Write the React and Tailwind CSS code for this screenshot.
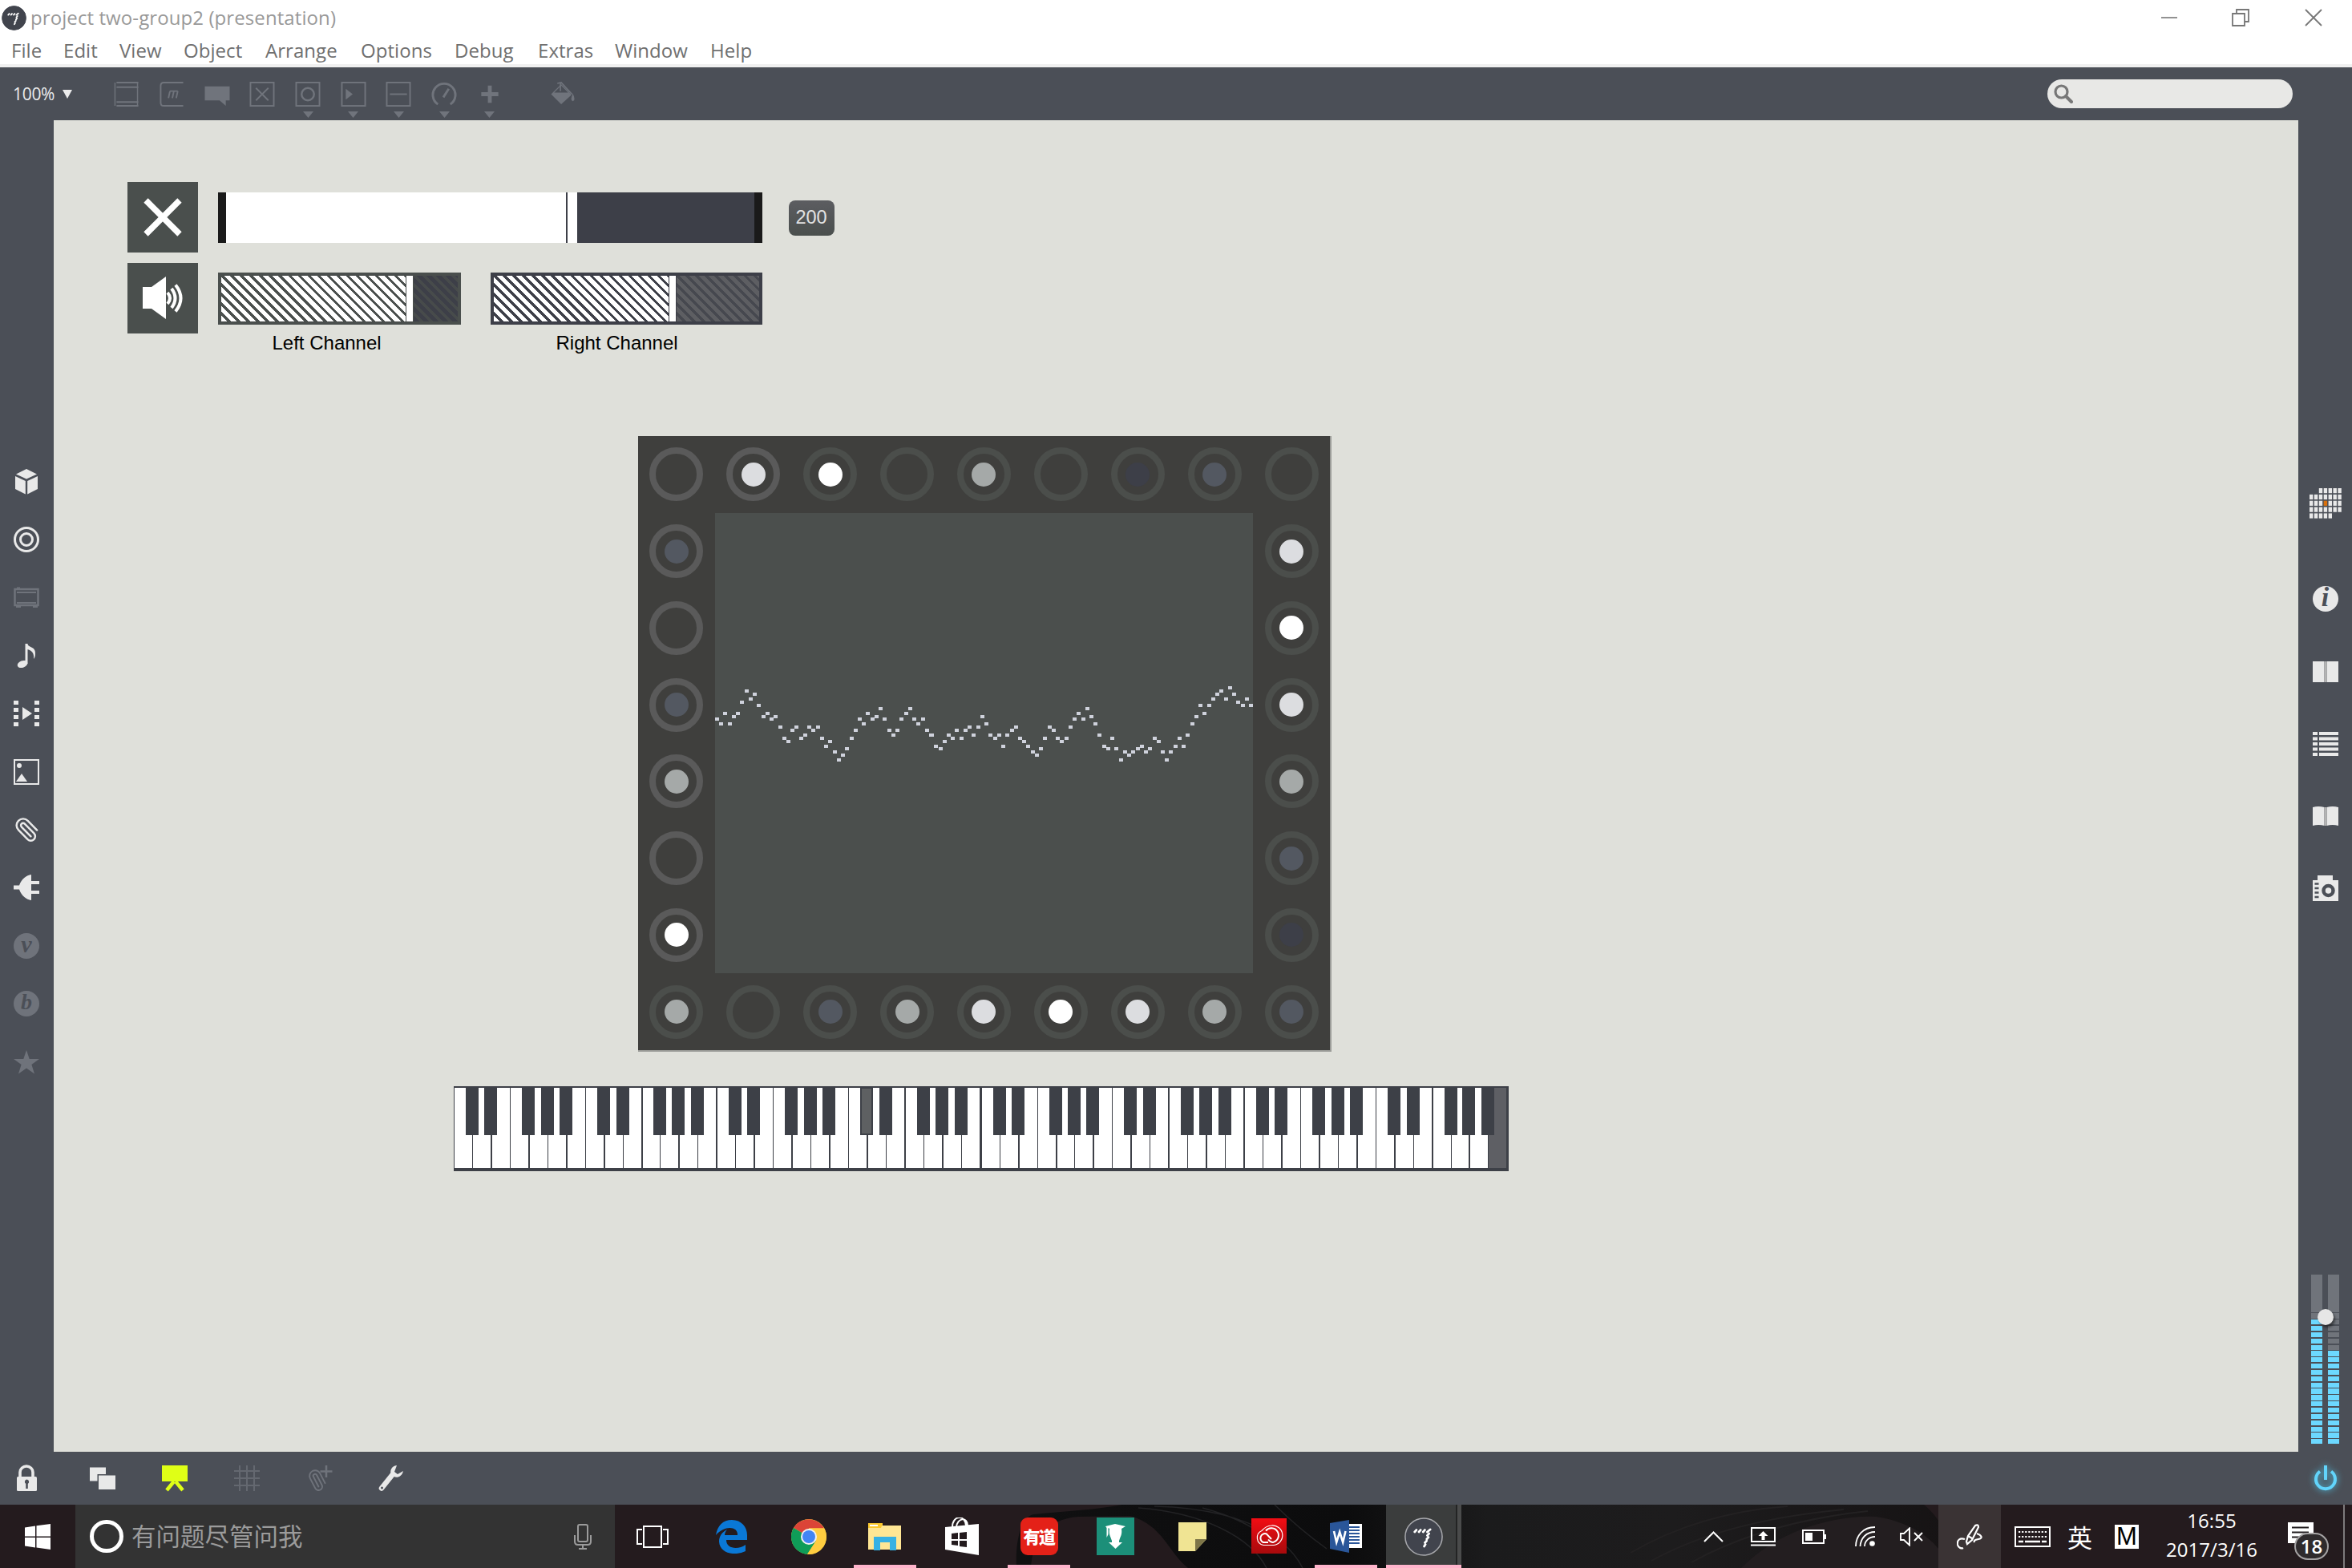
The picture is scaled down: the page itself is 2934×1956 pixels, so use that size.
import React from "react";

const Ico = ({ className = "", vb = "0 0 32 32", children }) => (
  <svg viewBox={vb} className={"block shrink-0 " + className}>
    {children}
  </svg>
);

/* ---------- title bar and menu ---------- */

const MaxLogo = ({ className, ring }) => (
  <Ico className={className}>
    <circle cx="16" cy="16" r="15.4" fill="#41444d" stroke={ring} strokeWidth="1" />
    <path d="M8.500 12l1.400-1.600M12 12l1.400-1.600M15.500 12l1.400-1.600M19 12l2.400-2M19 15l1.400-1.600M18.500 18l1.400-1.600M17 21l1.400-1.600M16.400 24l1-1.600" stroke="#fff" strokeWidth="1.900" strokeLinecap="round" />
  </Ico>
);

const menu = [
  ["File", "w-[65px]"], ["Edit", "w-[70px]"], ["View", "w-[80px]"], ["Object", "w-[102px]"], ["Arrange", "w-[119px]"],
  ["Options", "w-[117px]"], ["Debug", "w-[104px]"], ["Extras", "w-[96px]"], ["Window", "w-[119px]"], ["Help", "w-[80px]"],
];

const TitleBar = () => (
  <header className="h-[84px] shrink-0 border-b-4 border-[#f0f0f0] bg-white">
    <div className="flex h-[44px] items-center">
      <MaxLogo className="ml-[2px] h-[31px] w-[31px]" ring="#41444d" />
      <span className="ml-[5px] text-[24px] leading-none tracking-[0.09px] whitespace-nowrap text-[#999]">project two-group2 (presentation)</span>
      <div className="ml-auto flex items-center text-[#777]">
        <Ico className="mr-[67px] h-[22px] w-[22px]" vb="0 0 22 22"><path d="M1 11h20" stroke="currentColor" strokeWidth="1.6" /></Ico>
        <Ico className="mr-[69px] h-[22px] w-[22px]" vb="0 0 22 22">
          <path d="M1 6h15v15H1zM6 6V1h15v15h-5" fill="none" stroke="currentColor" strokeWidth="1.8" />
        </Ico>
        <Ico className="mr-[37px] h-[22px] w-[22px]" vb="0 0 22 22"><path d="M1 1l20 20M21 1L1 21" stroke="currentColor" strokeWidth="1.8" /></Ico>
      </div>
    </div>
    <nav className="flex h-[36px] items-center pl-[14px] pt-px">
      {menu.map(([m, w]) => (
        <span key={m} className={"shrink-0 text-[24px] leading-none tracking-[0.050px] whitespace-nowrap text-[#707070] " + w}>{m}</span>
      ))}
    </nav>
  </header>
);

/* ---------- top toolbar ---------- */

const S = { fill: "none", stroke: "currentColor", strokeWidth: 2 };
const tools = [
  <g key="a"><path d="M2 1v30M31 1v30" {...S} strokeWidth="1.5" /><path d="M4 1h28M4 7h28M4 26h28M4 31h28" {...S} /></g>,
  <g key="b"><path d="M31 1H6Q2 1 2 5v22q0 4 4 4h25" {...S} /><path d="M12 21l2-9M17 21l2-9M22 21l2-9M14 12h10" {...S} /></g>,
  <path key="c" d="M0 6h32v18h-5v7l-8-7H0z" fill="currentColor" />,
  <g key="d"><rect x="1" y="1" width="30" height="30" {...S} /><path d="M8 8l16 16M24 8L8 24" {...S} /></g>,
  <g key="e"><rect x="1" y="1" width="30" height="30" {...S} /><circle cx="16" cy="16" r="8" {...S} strokeWidth="2.5" /></g>,
  <g key="f"><rect x="1" y="1" width="30" height="30" {...S} /><path d="M6 9l9 7-9 7z" fill="currentColor" /></g>,
  <g key="g"><rect x="1" y="1" width="30" height="30" {...S} /><path d="M5 16h22" {...S} /></g>,
  <g key="h"><path d="M8 29a14.5 14.5 0 1 1 16 0" {...S} strokeWidth="3" /><path d="M15 20l7-11" {...S} strokeWidth="3" /></g>,
  <path key="i" d="M16 5v22M5 16h22" {...S} strokeWidth="5" />,
];

const TopBar = () => (
  <div className="flex h-[66px] shrink-0 items-center bg-[#4b4f57] text-[#70747c]">
    <div className="flex w-[129px] items-center pl-[16px]">
      <span className="text-[21px] leading-none tracking-[-0.3px] text-[#ececec]">100%</span>
      <Ico className="ml-[10px] h-[11px] w-[12px]" vb="0 0 12 11"><path d="M0 0h12L6 11z" fill="#ececec" /></Ico>
    </div>
    {tools.map((t, i) => (
      <div key={i} className="flex h-full w-[56.7px] shrink-0 flex-col items-center pt-[18px]">
        <Ico className="h-[31px] w-[32px]">{t}</Ico>
        {i > 3 && <Ico className="mt-[6px] h-[8px] w-[13px]" vb="0 0 13 8"><path d="M0 0h13L6.500 8z" fill="currentColor" /></Ico>}
      </div>
    ))}
    <Ico className="ml-[47px] h-[31px] w-[32px]">
      <path d="M1 16L14 3l13 13-1 2L14 29z" fill="currentColor" />
      <path d="M5 14L14 5l9 9z" fill="#4b4f57" />
      <path d="M9 2l5-1 14 15M13 2v10" {...S} strokeWidth="1.6" />
      <path d="M29 15q4 9 0 10-4-1 0-10" fill="currentColor" />
    </Ico>
    <div className="ml-auto mr-[74px] flex h-[36px] w-[306px] items-center rounded-full bg-[#e8e8e6] pl-[8px]">
      <Ico className="h-[24px] w-[24px]" vb="0 0 24 24">
        <circle cx="9.500" cy="9.500" r="7.500" fill="none" stroke="#777" strokeWidth="3.200" />
        <path d="M15 15l7 7" stroke="#777" strokeWidth="4" strokeLinecap="round" />
      </Ico>
    </div>
  </div>
);

/* ---------- side bars ---------- */

const L = "#e9e9e9";
const D = "#6f737b";
const BG = "#4b4f57";
const CLIP = "m16 6-8.414 8.586a2 2 0 0 0 2.829 2.829l8.414-8.586a4 4 0 1 0-5.657-5.657l-8.379 8.551a6 6 0 1 0 8.485 8.485l8.379-8.551";
const leftIcons = [
  <g key="1" fill={L}><path d="M16 0l13 6.500-13 6L3 6.500z" /><path d="M2 9l12.800 6v16.500L2 25z" /><path d="M30 9l-12.800 6v16.500L30 25z" /></g>,
  <g key="2" fill="none" stroke={L}><circle cx="16" cy="16" r="14.500" strokeWidth="3" /><circle cx="16" cy="16" r="7.500" strokeWidth="3" /></g>,
  <g key="3" fill="none" stroke={D}><rect x="1.500" y="6" width="29" height="20" strokeWidth="2.500" /><path d="M4 10h24M4 23h24" strokeWidth="2" /><path d="M4 4.500h4M3 28h6M24 28h6" strokeWidth="2" /></g>,
  <g key="4" fill={L}><ellipse cx="11" cy="26.500" rx="6.500" ry="4.300" transform="rotate(-20 11 26.500)" /><path d="M14.500 1h3v25h-3z" /><path d="M17 1c1 5 11 3 10 13 0 3-1 5-2 6 1-8-3-11-8-12z" /></g>,
  <g key="5" fill={L}>{[0, 9, 18, 27].map((y) => <g key={y}><rect x="0" y={y} width="6" height="5" /><rect x="26" y={y} width="6" height="5" /></g>)}<path d="M11 8l12 8-12 8z" /></g>,
  <g key="6"><rect x="1" y="1" width="30" height="30" fill="none" stroke={L} strokeWidth="2" /><circle cx="7" cy="8" r="3" fill={L} /><path d="M3 28l7-10 7 10z" fill={L} /></g>,
  <g key="7" transform="rotate(180 16 16) translate(32.500 -0.500) scale(-1.370 1.370)" fill="none" stroke={L} strokeWidth="1.800" strokeLinecap="round"><path d={CLIP} /></g>,
  <path key="8" d="M0 13.500h7C10 5 16 1 22 0v8h10v4H22v8h10v4H22v8C16 31 10 27 7 18.500H0z" fill={L} />,
];
const Badge = ({ ch, bg, fg, size }) => (
  <div className={"flex h-[32px] w-[32px] items-center justify-center rounded-full pb-[4px] font-['Liberation_Serif',serif] font-bold italic leading-none " + bg + " " + fg + " " + size}>{ch}</div>
);

const LeftBar = () => (
  <aside className="w-[67px] shrink-0 bg-[#4b4f57] pr-px pt-[414.500px]">
    {leftIcons.map((g, i) => (
      <div key={i} className="flex h-[72.400px] items-center justify-center"><Ico className="h-[32px] w-[32px] overflow-visible">{g}</Ico></div>
    ))}
    <div className="flex h-[72.400px] items-center justify-center"><Badge ch="v" bg="bg-[#6f737b]" fg="text-[#4b4f57]" size="text-[30px]" /></div>
    <div className="flex h-[72.400px] items-center justify-center"><Badge ch="b" bg="bg-[#6f737b]" fg="text-[#4b4f57]" size="text-[28px]" /></div>
    <div className="flex h-[72.400px] items-center justify-center">
      <Ico className="h-[32px] w-[32px]"><path d="M16 1l3.700 11H32l-9.600 7 3.600 11.500L16 23.500 6 30.500 9.600 19 0 12h12.300z" fill={D} /></Ico>
    </div>
  </aside>
);

const rightIcons = [
  <g key="1" fill={L}><rect x="0" y="3" width="14.500" height="26" /><rect x="17.500" y="3" width="14.500" height="26" /><rect x="14.500" y="3" width="3" height="26" fill="#b4b4b4" /></g>,
  <g key="2" fill={L}>{[1, 7.5, 14, 20.5, 27].map((y) => <g key={y}><rect x="0" y={y} width="6" height="4" /><rect x="8" y={y} width="24" height="4" /></g>)}</g>,
  <g key="3" fill={L}><path d="M0 5q7-2 14.500 0v23q-7-2-14.500 0zM32 5q-7-2-14.500 0v23q7-2 14.500 0z" /><rect x="14.500" y="5" width="3" height="23" fill="#b4b4b4" /></g>,
  <g key="4"><path d="M0 6h6V0h19v6h7v26H0z" fill={L} /><circle cx="19.500" cy="19" r="6" fill={L} stroke={BG} strokeWidth="4.500" /><path d="M2.500 10.500h5M2.500 16h5M2.500 21.500h5M2.500 27h5" stroke={BG} strokeWidth="2.500" /></g>,
];

const gridCells = [];
[[2, 6], [0, 6], [0, 6], [0, 6], [0, 4]].forEach(([a, b], r) => {
  for (let c = a; c <= b; c++) gridCells.push([c, r]);
});

const Meter = ({ lit }) => (
  <div className="flex w-[14.300px] flex-col">
    <div className="h-[46.700px] bg-[#70747b]" />
    {Array.from({ length: 21 }, (_, i) => (
      <div key={i} className={"mt-[1.670px] h-[6.200px] " + (i >= 21 - lit ? "bg-[#6cd8ff]" : "bg-[#70747b]")} />
    ))}
  </div>
);

const RightBar = () => (
  <aside className="flex w-[67px] shrink-0 flex-col items-center bg-[#4b4f57] pt-[459px]">
    <Ico className="h-[38px] w-[40px]" vb="0 0 40 38">
      {gridCells.map(([c, r]) => (
        <rect key={c + "-" + r} x={c * 5.9} y={r * 7.85} width="4.400" height="6.200" fill={c === 3 && r === 2 ? "#d9700c" : L} />
      ))}
    </Ico>
    <div className="mt-[54px] flex h-[92px] items-center"><Badge ch="i" bg="bg-[#e9e9e9]" fg="text-[#4b4f57]" size="text-[34px]" /></div>
    {rightIcons.map((g, i) => (
      <div key={i} className="flex h-[90px] items-center"><Ico className="h-[32px] w-[32px]">{g}</Ico></div>
    ))}
    <div className="relative mt-[437px] flex h-[212px] gap-[7px]">
      <Meter lit={20} />
      <Meter lit={15} />
      <div className="absolute left-[8px] top-[43px] h-[20px] w-[20px] rounded-full bg-[#e6e6e6] shadow-[2px_3px_3px_rgba(0,0,0,0.45)]" />
    </div>
  </aside>
);

/* ---------- patch contents ---------- */

const Hatch = ({ box, on, off, fillW }) => (
  <div className={"flex h-[65px] p-[4px] " + box}>
    <div className={"h-full " + fillW + " " + on} />
    <div className="mx-px h-full w-[8px] bg-white" />
    <div className={"h-full flex-1 " + off} />
  </div>
);

const Controls = () => (
  <section className="h-[317px] pl-[91.500px] pt-[77px]">
    <div className="flex h-[88px] items-center">
      <div className="flex h-[88px] w-[88px] items-center justify-center bg-[#4a4f4d]">
        <Ico className="h-[50px] w-[50px]" vb="0 0 50 50"><path d="M4 4l42 42M46 4L4 46" stroke="#fff" strokeWidth="7.500" /></Ico>
      </div>
      <div className="ml-[25px] flex h-[63px] w-[679px] border-x-[10px] border-[#1a1a1a] bg-[#3d3f48]">
        <div className="h-full w-[424px] bg-white" />
        <div className="ml-[2px] h-full w-[12px] bg-white" />
      </div>
      <div className="ml-[33px] mt-[2px] flex h-[44px] w-[57px] items-center justify-center rounded-[8px] bg-linear-to-b from-[#5c5d61] to-[#4a4f4d] font-['Liberation_Sans',sans-serif] text-[23.500px] leading-none text-[#e2e2e2]">200</div>
    </div>
    <div className="mt-[13px] flex items-start font-['Liberation_Sans',sans-serif] text-[24px] leading-none text-black">
      <div className="flex h-[88px] w-[88px] items-center justify-center bg-[#4a4f4d]">
        <Ico className="ml-[2px] h-[54px] w-[54px]" vb="0 0 54 54">
          <path d="M1 13h11L30 0v53L12 40H1z" fill="#fff" />
          <path d="M32 20q6 7 0 14M37 15q9 12 0 24M42 10.500q13 16.500 0 33" fill="none" stroke="#fff" strokeWidth="4" />
        </Ico>
      </div>
      <div className="ml-[25px] mt-[12px] w-[303px]">
        <Hatch
          box="bg-[#4a4f4d]"
          on="bg-[repeating-linear-gradient(45deg,#ffffff_0_5.5px,#4a4f4d_5.5px_8.5px)]"
          off="bg-[repeating-linear-gradient(45deg,#3d3f48_0_5.5px,#474b4b_5.5px_8.5px)]"
          fillW="w-[230px]"
        />
        <p className="ml-[68px] mt-[11px] whitespace-nowrap">Left Channel</p>
      </div>
      <div className="ml-[37px] mt-[12px] w-[339px]">
        <Hatch
          box="bg-[#3d3f48]"
          on="bg-[repeating-linear-gradient(45deg,#ffffff_0_5.5px,#3d3f48_5.5px_8.5px)]"
          off="bg-[repeating-linear-gradient(45deg,#5d5e62_0_5.5px,#46484f_5.5px_8.5px)]"
          fillW="w-[218px]"
        />
        <p className="ml-[82px] mt-[11px] whitespace-nowrap">Right Channel</p>
      </div>
    </div>
  </section>
);

const G = "bg-[#a5a9a8]";
const W = "bg-white";
const P = "bg-[#dcdde0]";
const B = "bg-[#535861]";
const K = "bg-[#3d3f48]";
const N = "";

const Knob = ({ dot, bright }) => (
  <div className="flex items-center justify-center">
    <div className={"flex h-[67px] w-[67px] items-center justify-center rounded-full border-[8px] " + (bright ? "border-[#5a5a5a]" : "border-[#4b4e4b]")}>
      {dot && <div className={"h-[30px] w-[30px] rounded-full " + dot} />}
    </div>
  </div>
);

const topRow = [N, P, W, N, G, N, K, B, N];
const leftCol = [B, N, B, G, N, W];
const rightCol = [P, W, P, G, B, K];
const bottomRow = [G, N, B, G, P, W, P, G, B];

/* oscilloscope trace, 128 samples, in thirds of a pixel */
const trace = [
  1088, 1106, 1065, 1106, 1077, 1065, 1024, 983, 1012, 994, 1035, 1077, 1065, 1088, 1077, 1118, 1159, 1170, 1130, 1118, 1159, 1147, 1118, 1130,
  1118, 1159, 1188, 1170, 1211, 1241, 1223, 1199, 1159, 1130, 1088, 1106, 1065, 1088, 1077, 1047, 1088, 1130, 1147, 1130, 1088, 1065, 1047, 1088,
  1106, 1088, 1130, 1147, 1188, 1199, 1170, 1147, 1159, 1130, 1159, 1130, 1118, 1147, 1118, 1077, 1106, 1147, 1159, 1147, 1188, 1147, 1130, 1118,
  1159, 1170, 1188, 1211, 1223, 1199, 1159, 1118, 1130, 1159, 1170, 1159, 1118, 1088, 1065, 1088, 1047, 1077, 1106, 1147, 1188, 1199, 1159, 1199,
  1241, 1211, 1223, 1211, 1199, 1188, 1211, 1199, 1159, 1170, 1211, 1241, 1211, 1188, 1159, 1188, 1147, 1106, 1077, 1035, 1065, 1035, 1012, 994,
  983, 1012, 971, 994, 1024, 1035, 1012, 1035,
];

const KnobPanel = () => (
  <section className="ml-[729px] mt-[77px] grid h-[768px] w-[865px] grid-cols-9 grid-rows-8 border-b-2 border-r-2 border-[#9c9d99] bg-[#3f3f3d]">
    {topRow.map((d, i) => <Knob key={"t" + i} dot={d} bright={i < 2} />)}
    <Knob dot={leftCol[0]} bright />
    <svg className="col-span-7 row-span-6 h-full w-full bg-[#4b4f4d]" viewBox="0 0 670 574" preserveAspectRatio="none" shapeRendering="crispEdges">
      {trace.map((y, i) => (
        <rect key={i} x={Math.round(i * 5.236)} y={Math.round((y - 316) / 3 - 2)} width="5" height="4" fill="#cfd2dc" />
      ))}
    </svg>
    <Knob dot={rightCol[0]} />
    {[1, 2, 3, 4, 5].map((i) => (
      <React.Fragment key={i}>
        <Knob dot={leftCol[i]} bright />
        <Knob dot={rightCol[i]} />
      </React.Fragment>
    ))}
    {bottomRow.map((d, i) => <Knob key={"b" + i} dot={d} />)}
  </section>
);

const whiteKeys = Array.from({ length: 56 }, (_, i) => i);
const hasSharp = (i) => [0, 1, 3, 4, 5].includes(i % 7);

const Piano = () => (
  <section className="ml-[499px] mt-[43px] flex h-[106px] w-[1316px] border-b-[4px] border-t-2 border-l-[1px] border-[#3d4047] bg-[#3d4047]">
    {whiteKeys.map((i) => (
      <div
        key={i}
        className={
          "relative h-full flex-1 border-[#3d4047] " +
          (i === 55 ? "bg-[#5e5f64] " : "bg-white ") +
          (i === 27 || i === 55 ? "border-r-[3px]" : i % 2 ? "border-r-2" : "border-r-[1px]")
        }
      >
        {hasSharp(i) && (
          <div className={"absolute -right-[8px] -top-px z-10 h-[60px] w-[16px] " + (i === 21 ? "border-2 border-[#3d4047] bg-[#5e6062]" : "bg-[#3d4047]")} />
        )}
      </div>
    ))}
  </section>
);

/* ---------- bottom toolbar ---------- */

const bottomIcons = [
  <g key="1" fill={L}><path d="M8 14V8.500a8 7.500 0 0 1 16 0V14" fill="none" stroke={L} strokeWidth="3.600" /><rect x="4" y="14" width="25" height="18" rx="1.500" /><path d="M16.500 17.500a3 3 0 0 1 1.300 5.500v6h-2.600v-6a3 3 0 0 1 1.300-5.500" fill={BG} /></g>,
  <g key="2" fill={L}><rect x="0" y="2.500" width="20" height="17" /><rect x="9.500" y="11" width="23" height="20" fill={BG} /><rect x="11" y="12.500" width="21" height="17.500" /></g>,
  <g key="3"><rect x="0" y="0" width="32" height="20" fill="#dfff16" /><path d="M15 20L6 31M17 20l9 11" stroke="#dfff16" strokeWidth="4.500" /></g>,
  <path key="4" d="M7 0v32M16 0v32M25 0v32M0 7h32M0 16h32M0 25h32" stroke="#646870" strokeWidth="2" />,
  <g key="5" fill="none" stroke="#6f737b"><path d="M25 0v15M17.500 7.500h15" strokeWidth="2.500" /><g transform="translate(13 18.500) rotate(197) scale(-1.150 1.150) translate(-12 -12)"><path d={CLIP} strokeWidth="1.700" strokeLinecap="round" /></g></g>,
  <g key="6"><path d="M4 28.500L18 11" stroke={L} strokeWidth="6.500" strokeLinecap="round" /><path d="M23 0c-7 1-9 7-7 11 4 6 13 5 15-4l-7 4-4-3z" fill={L} /><circle cx="4.500" cy="28" r="1.500" fill={BG} /></g>,
];

const BottomBar = () => (
  <div className="flex h-[66px] shrink-0 items-center bg-[#4b4f57]">
    <Ico className="ml-[17px] h-[32px] w-[32px] overflow-visible">{bottomIcons[0]}</Ico>
    <div className="ml-[63px] flex gap-[58px]">
      {bottomIcons.slice(1).map((g, i) => <Ico key={i} className="h-[32px] w-[32px] overflow-visible">{g}</Ico>)}
    </div>
    <div className="ml-auto flex w-[67px] justify-center">
      <Ico className="h-[30px] w-[30px] overflow-visible drop-shadow-[0_0_4px_#4fc3e6]" vb="0 0 30 30">
        <path d="M8 6.500a12 12 0 1 0 14 0" fill="none" stroke="#62d4fb" strokeWidth="4" />
        <path d="M15 -1v18" stroke="#62d4fb" strokeWidth="4" />
      </Ico>
    </div>
  </div>
);

/* ---------- task bar ---------- */

const apps = [
  [<Ico key="tv" className="mr-[4px] h-[28px] w-[40px]" vb="0 0 40 28"><path d="M9 1h22v26H9zM7 5H1v18h6M33 5h6v18h-6" fill="none" stroke="#fff" strokeWidth="2" /></Ico>, false],
  [<Ico key="ed" className="h-[42px] w-[39px]" vb="0 0 39 42">
    <path d="M0 19C2 7 9 0 20 0c12 0 19 9 19 19v6H13c0 12 16 12 24 6v8c-12 6-32 4-33-12 0-7 4-12 10-15-2 2-3 5-3 7h16C28 8 11 6 0 19z" fill="#0a78d6" />
  </Ico>, false],
  [<Ico key="ch" className="h-[44px] w-[44px]" vb="0 0 44 44">
    <circle cx="22" cy="22" r="22" fill="#ffcd40" />
    <path d="M22 22L3 11A22 22 0 0 1 41 11.500H22z" fill="#db4437" />
    <path d="M3 11A22 22 0 0 0 20 44l11-17-9-5z" fill="#0f9d58" />
    <path d="M22 11.500h19.300A22 22 0 0 1 20 44l11-17z" fill="#ffcd40" />
    <circle cx="22" cy="22" r="10" fill="#f1f1f1" /><circle cx="22" cy="22" r="8" fill="#4285f4" />
  </Ico>, false],
  [<Ico key="ex" className="h-[34px] w-[42px]" vb="0 0 42 34">
    <path d="M0 0h18v5H0z" fill="#f7c52c" /><path d="M0 3h41v30H0z" fill="#ffe694" /><path d="M0 1h18l-2 5H0z" fill="#fcc92f" /><rect x="2" y="2" width="10" height="2" fill="#fff" />
    <path d="M7 34V17h28v17h-8v-10H15v10z" fill="#37b1e4" />
  </Ico>, true],
  [<Ico key="st" className="h-[47px] w-[42px]" vb="0 0 42 47">
    <path d="M0 12l42-4v39L0 40z" fill="#fff" /><path d="M9 12C9-3 25-4 26 10M14 12C15 0 28-1 28 10" fill="none" stroke="#fff" strokeWidth="2" />
    <path d="M8 20l8-1v8H8zM18 19l9-1v9h-9zM8 29h8v6l-8-1zM18 29h9v8l-9-1z" fill="#231a1d" />
  </Ico>, false],
  [<div key="yd" className="flex h-[47px] w-[47px] items-center justify-center rounded-[9px] bg-[#e42118] font-['Noto_Sans_CJK_SC',sans-serif] text-[21px] leading-none font-black tracking-[-1.500px] text-white">有道</div>, true],
  [<Ico key="sc" className="h-[47px] w-[47px]" vb="0 0 47 47">
    <path d="M0 0h47v47H0z" fill="#1c8f79" /><path d="M11 11l12-3 13 3-5 3c1 7-1 9-3 15v2h4l-8.500 8-8.500-8h4v-2c-2-6-4-8-3-15l-1.500-1v8l-2 4V13z" fill="#fff" />
  </Ico>, false],
  [<Ico key="nt" className="h-[36px] w-[35px]" vb="0 0 35 36"><path d="M0 0h35v21L21 36H0z" fill="#f0e493" /><path d="M21 21h14L21 36z" fill="#7d7548" /></Ico>, false],
  [<Ico key="cc" className="mb-[2px] h-[44px] w-[44px]" vb="0 0 44 44">
    <defs><linearGradient id="ccg" x1="0" y1="0" x2="0" y2="1"><stop offset="0" stopColor="#f20d14" /><stop offset="1" stopColor="#a80a0c" /></linearGradient></defs>
    <path d="M0 0h44v44H0z" fill="url(#ccg)" />
    <path d="M15 33.500a9.500 9.500 0 0 1-2-18C17 11 20 9 25 9a12.300 12.300 0 0 1 3 24.500z" fill="none" stroke="#fff" strokeWidth="1.200" />
    <path d="M25 26l-6-6.500a5.500 5.500 0 1 0-4 10.500h6M18 15.500a9 9 0 1 1 9 14.500c-3 0-4-1-6-3.500" fill="none" stroke="#fff" strokeWidth="2" />
  </Ico>, false],
  [<Ico key="wd" className="h-[41px] w-[40px]" vb="0 0 40 41">
    <path d="M22 5h18v30H22z" fill="#fff" /><path d="M24 9h13M24 13h13M24 17h13M24 21h13M24 25h13M24 29h13" stroke="#2a5699" strokeWidth="1.800" />
    <path d="M0 4l24-4v41L0 36z" fill="#2a5699" /><path d="M5 14l3.200 14 4-13 4 13L19.500 14" fill="none" stroke="#fff" strokeWidth="2.600" />
  </Ico>, true],
];

const Tray = () => (
  <div className="relative flex h-full items-center text-white">
    <Ico className="h-[14px] w-[25px]" vb="0 0 25 14"><path d="M1 13L12.500 1.500 24 13" fill="none" stroke="#fff" strokeWidth="2" /></Ico>
    <Ico className="ml-[34px] h-[24px] w-[31px]" vb="0 0 31 24"><path d="M1 1h29v17H1zM0 22.500h31" fill="none" stroke="#fff" strokeWidth="2" /><path d="M15.500 5l6 6h-4v5h-4v-5h-4z" fill="#fff" /></Ico>
    <Ico className="ml-[33px] h-[18px] w-[30px]" vb="0 0 30 18"><path d="M1 1h26v16H1z" fill="none" stroke="#fff" strokeWidth="2" /><path d="M4 4h9v10H4zM27 6h3v6h-3z" fill="#fff" /></Ico>
    <Ico className="ml-[36px] h-[25px] w-[26px]" vb="0 0 26 25">
      <path d="M1 25C1 12 10 1 25 1M6.500 25C7 15 14 7 25 7M12 25c0-7 6-12 13-12" fill="none" stroke="#fff" strokeWidth="1.800" /><circle cx="21.500" cy="21.500" r="3.300" fill="#fff" />
    </Ico>
    <Ico className="ml-[30px] h-[24px] w-[29px]" vb="0 0 29 24"><path d="M1 8h4l7-6.500v21L5 16H1zM18 7l10 10M28 7L18 17" fill="none" stroke="#fff" strokeWidth="1.900" /></Ico>
    <div className="ml-[19px] flex h-full w-[78px] items-center justify-center bg-[#3a3334]">
      <Ico className="h-[32px] w-[32px]">
        <path d="M12 22l2-7L23 2q4-2 4 2l-8 16-6 5zM14 15l5 3M10 19c-6-2-10 1-9 7 1 4 5 5 7 4M25 12c6 2 8 6 2 7-5 1-6 2-5 4" fill="none" stroke="#fff" strokeWidth="2.200" />
      </Ico>
    </div>
    <Ico className="ml-[17px] h-[26px] w-[45px]" vb="0 0 45 26">
      <path d="M1 1h43v24H1z" fill="none" stroke="#fff" strokeWidth="2" /><path d="M5 7h35M5 13h35" stroke="#fff" strokeWidth="2.200" strokeDasharray="2.200 1.900" /><path d="M5 19h6M13 19h19M34 19h6" stroke="#fff" strokeWidth="2.400" />
    </Ico>
    <span className="ml-[21px] w-[32px] font-['Noto_Sans_CJK_SC',sans-serif] text-[31px] leading-none">英</span>
    <div className="ml-[27px] flex h-[30px] w-[30px] items-center justify-center bg-white font-['Liberation_Sans',sans-serif] text-[31px] leading-none text-black">M</div>
    <div className="ml-[31px] w-[120px] pb-[3px] text-center text-[24px] leading-[36px] tracking-[0.050px] whitespace-nowrap">
      <div>16:55</div>
      <div>2017/3/16</div>
    </div>
    <div className="relative ml-[35px] h-[48px] w-[51px] translate-y-[6px]">
      <Ico className="h-[34px] w-[32px]" vb="0 0 32 34"><path d="M0 0h32v26H18l-6 7v-7H0z" fill="#fff" /><path d="M5 6.500h21M5 12.500h21M5 18.500h14" stroke="#231e20" strokeWidth="2.200" /></Ico>
      <div className="absolute left-[8px] top-[13px] flex h-[34px] w-[43px] items-center justify-center rounded-full border-2 border-[#a5a3a4] bg-[#2f2b2d] text-[24px] leading-none font-semibold">18</div>
    </div>
    <div className="ml-[18px] h-full w-[11px] border-l-2 border-[#7d7a7b]" />
  </div>
);

const TaskBar = () => (
  <footer className="relative flex h-[79px] shrink-0 items-stretch overflow-hidden bg-[#241b1e]">
    <svg className="absolute inset-0 h-full w-full" viewBox="0 0 2934 79" preserveAspectRatio="none">
      <defs>
        <linearGradient id="hair" x1="1270" y1="0" x2="2440" y2="0" gradientUnits="userSpaceOnUse">
          <stop offset="0" stopColor="#101011" /><stop offset="0.350" stopColor="#0c0c0d" /><stop offset="0.500" stopColor="#1b1b1c" /><stop offset="0.700" stopColor="#1d1c1d" /><stop offset="1" stopColor="#161314" />
        </linearGradient>
      </defs>
      <path d="M1268 79C1266 45 1274 14 1290 12C1330 8 1370 6 1400 0H2400C2425 20 2434 50 2438 79Z" fill="url(#hair)" />
      <path d="M1286 79C1288 45 1305 18 1345 15L1410 14C1450 25 1458 60 1482 79Z" fill="#231a1d" />
      <path d="M2172 79C2220 30 2290 13 2340 15C2390 22 2422 50 2432 79Z" fill="#231e20" />
      <path d="M1420 4C1500 10 1560 40 1580 79M1590 0Q1620 30 1655 55M1440 2C1530 4 1600 30 1625 79M1500 4Q1560 20 1590 50" fill="none" stroke="#222224" strokeWidth="1.500" />
      <path d="M2034 60Q2120 10 2230 2M2060 70Q2150 20 2300 6M2110 72Q2200 22 2330 8" fill="none" stroke="#232122" strokeWidth="2" />
    </svg>
    <div className="relative flex w-[94px] items-center justify-center">
      <Ico className="h-[32px] w-[32px]"><path d="M0 4.500l13-2v13H0zM14.500 2.300L32 0v15.500H14.500zM0 17h13v12.500l-13-2zM14.500 17H32v15l-17.500-2.500z" fill="#fff" /></Ico>
    </div>
    <div className="relative flex w-[673px] items-center bg-[#333333] pl-[18px]">
      <div className="h-[41px] w-[42px] rounded-full border-[5px] border-white" />
      <span className="ml-[10px] pb-[2px] font-['Noto_Sans_CJK_SC',sans-serif] text-[30.500px] leading-none whitespace-nowrap text-[#9b9b9b]">有问题尽管问我</span>
      <Ico className="ml-auto mr-[29px] h-[32px] w-[22px]" vb="0 0 22 32">
        <rect x="5" y="1" width="12" height="21" rx="2" fill="none" stroke="#9b9b9b" strokeWidth="2" />
        <path d="M1 14v8q0 4 4 4h12q4 0 4-4v-8M11 26v5M6 31h10" fill="none" stroke="#9b9b9b" strokeWidth="2" />
      </Ico>
    </div>
    <div className="relative flex">
      {apps.map(([icon, open], i) => (
        <div key={i} className={"flex justify-center " + (i === 0 ? "w-[98px]" : "w-[95.800px]")}>
          <div className={"flex w-[78px] items-center justify-center pt-[4px] " + (open ? "border-b-4 border-[#ffb3cb]" : "border-b-4 border-transparent")}>{icon}</div>
        </div>
      ))}
      <div className="ml-[2px] flex w-[94px] border-b-4 border-[#ffb3cb]">
        <div className="flex w-[87px] items-center justify-center bg-[#3b3d3d] pl-[6px] pt-[4px]"><MaxLogo className="h-[48px] w-[48px]" ring="#a8a9ad" /></div>
        <div className="flex-1 border-l-2 border-[#232424] bg-[#4a4b4b]" />
      </div>
    </div>
    <div className="relative ml-auto"><Tray /></div>
  </footer>
);

export default function App() {
  return (
    <div className="flex h-[1956px] w-[2934px] flex-col overflow-hidden bg-[#4b4f57] font-['Open_Sans','Noto_Sans_CJK_SC',sans-serif]">
      <TitleBar />
      <TopBar />
      <div className="flex h-[1661px] shrink-0">
        <LeftBar />
        <main className="w-[2800px] shrink-0 bg-[#dfe0da]">
          <Controls />
          <KnobPanel />
          <Piano />
        </main>
        <RightBar />
      </div>
      <BottomBar />
      <TaskBar />
    </div>
  );
}
